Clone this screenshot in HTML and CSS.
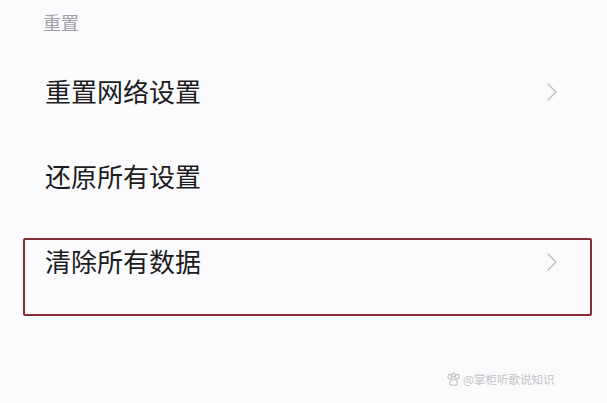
FILE: index.html
```html
<!DOCTYPE html>
<html lang="zh">
<head>
<meta charset="utf-8">
<link rel="stylesheet" href="styles.css">
</head>
<body>
<div class="page">
  <div class="section-title">重置</div>
  <div class="list">
    <div class="row">
      <span class="label">重置网络设置</span>
      <svg class="chev" width="12" height="20" viewBox="0 0 12 20"><path d="M2 2 L10 10 L2 18" fill="none" stroke="#bdbdc2" stroke-width="1.4" stroke-linecap="round" stroke-linejoin="round"/></svg>
    </div>
    <div class="row">
      <span class="label">还原所有设置</span>
    </div>
    <div class="row">
      <span class="label">清除所有数据</span>
      <svg class="chev" width="12" height="20" viewBox="0 0 12 20"><path d="M2 2 L10 10 L2 18" fill="none" stroke="#bdbdc2" stroke-width="1.4" stroke-linecap="round" stroke-linejoin="round"/></svg>
    </div>
  </div>
  <div class="highlight"></div>
  <div class="watermark">
    <svg width="15" height="15" viewBox="0 0 16 16"><g fill="none" stroke="#c4c4c4" stroke-width="1.2"><ellipse cx="4" cy="5" rx="2" ry="2.5"/><ellipse cx="8" cy="3.2" rx="1.8" ry="2.2"/><ellipse cx="12" cy="5" rx="2" ry="2.5"/><path d="M4 13 C4 9 6 8 8 8 C10 8 12 9 12 13 C10 14.5 6 14.5 4 13 Z"/></g></svg>
    <span>@掌柜听歌说知识</span>
  </div>
</div>
</body>
</html>
```
FILE: styles.css
```css
html, body {
  margin: 0;
  padding: 0;
  background: #fbfbfd;
}
.page {
  position: relative;
  width: 607px;
  height: 403px;
  overflow: hidden;
  font-family: "Noto Sans CJK SC", "Noto Sans", sans-serif;
}
.section-title {
  padding: 11px 0 0 43px;
  height: 38px;
  box-sizing: border-box;
  font-size: 18px;
  line-height: 22px;
  color: #a0a0a8;
}
.list {
  display: flex;
  flex-direction: column;
}
.row {
  height: 85px;
  box-sizing: border-box;
  padding: 24px 49px 0 45px;
  display: flex;
  align-items: flex-start;
  justify-content: space-between;
}
.row:first-child {
  padding-top: 36px;
  height: 97px;
}
.label {
  font-size: 26px;
  line-height: 34px;
  color: #1c1c1e;
}
.chev {
  margin-top: 8px;
}
.highlight {
  position: absolute;
  left: 23px;
  top: 238px;
  width: 565px;
  height: 74px;
  border: 2px solid #8a2a36;
  border-radius: 2px;
}
.watermark {
  position: absolute;
  left: 446px;
  top: 371px;
  display: flex;
  align-items: center;
  gap: 2px;
  font-size: 11.5px;
  line-height: 16px;
  color: #c4c4c6;
}
```
